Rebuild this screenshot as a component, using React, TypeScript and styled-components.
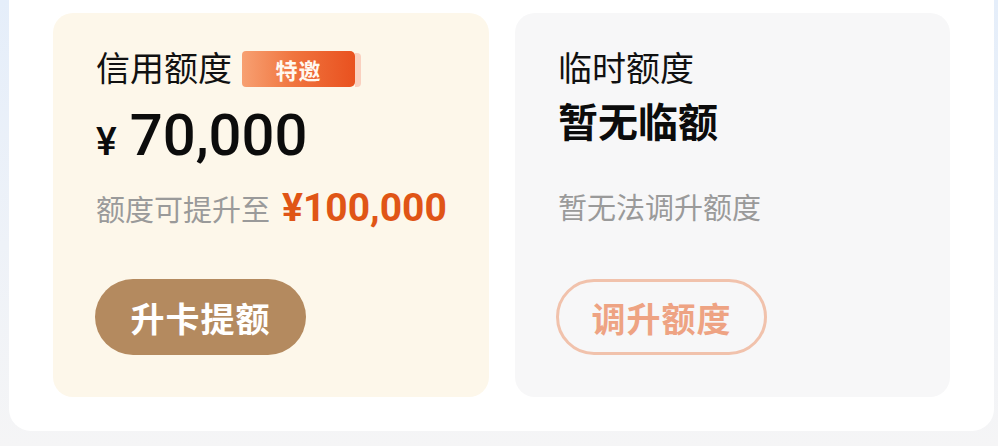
import styled, { createGlobalStyle } from 'styled-components';

const GlobalStyle = createGlobalStyle`
	html, body {
		margin: 0;
		padding: 0;
	}
	body {
		width: 998px;
		height: 446px;
		overflow: hidden;
		background: linear-gradient(180deg, #e5eefa 0%, #eef2f8 55%, #f5f5f6 100%);
		font-family: 'Noto Sans CJK SC', 'Noto Sans', sans-serif;
	}
`;

const Page = styled.div`
	height: 446px;
	padding: 0 4px 0 9px;
	box-sizing: border-box;
`;

const Panel = styled.div`
	background: #ffffff;
	border-radius: 0 0 22px 22px;
	padding: 13px 42px 34px 44px;
	display: grid;
	grid-template-columns: 436px 435px;
	gap: 26px;
`;

const Card = styled.div<{ $tone: 'gold' | 'grey' }>`
	background: ${(p) => (p.$tone === 'gold' ? '#fdf7ea' : '#f7f7f8')};
	border-radius: 20px;
	height: 384px;
	box-sizing: border-box;
	padding: 34px 0 0 43px;
	display: flex;
	flex-direction: column;
	align-items: flex-start;
`;

const TitleRow = styled.div`
	display: flex;
	align-items: center;
	gap: 10px;
	height: 40px;
`;

const Title = styled.span`
	font-size: 34px;
	line-height: 40px;
	color: #111;
`;

const Badge = styled.span`
	position: relative;
	display: inline-flex;
	align-items: center;
	justify-content: center;
	width: 113px;
	height: 36px;
	margin-top: 4px;
	border-radius: 4px 5px 5px 4px;
	background: linear-gradient(90deg, #f7a072 0%, #f0753f 45%, #e9511f 100%);
	color: #fff8f0;
	font-size: 22px;
	font-weight: 700;
	letter-spacing: 1px;
	&::after {
		content: '';
		position: absolute;
		right: -6px;
		top: 2px;
		width: 6px;
		height: 34px;
		border-radius: 0 4px 4px 0;
		background: rgba(246, 160, 140, 0.45);
	}
`;

const Amount = styled.div`
	display: flex;
	align-items: baseline;
	gap: 13px;
	margin-top: 15px;
	height: 66px;
	color: #0c0c0c;
	font-family: Roboto, 'Noto Sans', sans-serif;
`;

const Currency = styled.span`
	font-size: 39px;
	font-weight: 500;
`;

const Digits = styled.span`
	font-size: 58px;
	font-weight: 500;
	line-height: 66px;
`;

const Strong = styled.div`
	font-size: 40px;
	line-height: 48px;
	font-weight: 700;
	color: #0c0c0c;
	margin-top: 9px;
`;

const Note = styled.div<{ $gap: number }>`
	display: flex;
	align-items: baseline;
	gap: 12px;
	margin-top: ${(p) => p.$gap}px;
	font-size: 29px;
	line-height: 40px;
	color: #9a9a9a;
`;

const Raise = styled.span`
	font-family: Roboto, 'Noto Sans', sans-serif;
	font-size: 39px;
	font-weight: 700;
	color: #e05516;
`;

const Button = styled.div<{ $variant: 'solid' | 'outline' }>`
	margin-top: auto;
	margin-bottom: 42px;
	margin-left: ${(p) => (p.$variant === 'outline' ? '-2px' : '-1px')};
	width: 211px;
	height: 76px;
	box-sizing: border-box;
	border-radius: 38px;
	display: flex;
	align-items: center;
	justify-content: center;
	font-size: 34px;
	font-weight: 700;
	letter-spacing: 1px;
	${(p) =>
		p.$variant === 'solid'
			? 'background: #b48a5f; color: #ffffff;'
			: 'background: transparent; border: 3px solid #f1c2ac; color: #eea383;'}
`;

const App = () => {
	return (
		<Page>
			<GlobalStyle />
			<Panel>
				<Card $tone='gold'>
					<TitleRow>
						<Title>信用额度</Title>
						<Badge>特邀</Badge>
					</TitleRow>
					<Amount>
						<Currency>¥</Currency>
						<Digits>70,000</Digits>
					</Amount>
					<Note $gap={20}>
						额度可提升至
						<Raise>¥100,000</Raise>
					</Note>
					<Button $variant='solid'>升卡提额</Button>
				</Card>
				<Card $tone='grey'>
					<TitleRow>
						<Title>临时额度</Title>
					</TitleRow>
					<Strong>暂无临额</Strong>
					<Note $gap={42}>暂无法调升额度</Note>
					<Button $variant='outline'>调升额度</Button>
				</Card>
			</Panel>
		</Page>
	);
};

export default App;
